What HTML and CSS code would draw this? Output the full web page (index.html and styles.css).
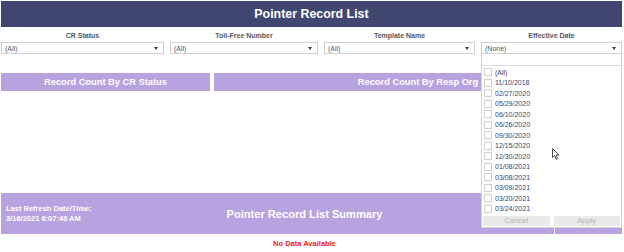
FILE: index.html
```html
<!DOCTYPE html>
<html lang="en">
<head>
  <meta charset="UTF-8">
  <title>Pointer Record List</title>
  <link rel="stylesheet" href="styles.css">
</head>
<body>
  <div class="page">
    <div class="title-bar">Pointer Record List</div>

    <div class="filters">
      <div class="filter">
        <div class="filter-label">CR Status</div>
        <div class="select"><span>(All)</span><i class="caret"></i></div>
      </div>
      <div class="filter">
        <div class="filter-label">Toll-Free Number</div>
        <div class="select"><span>(All)</span><i class="caret"></i></div>
      </div>
      <div class="filter">
        <div class="filter-label">Template Name</div>
        <div class="select"><span>(All)</span><i class="caret"></i></div>
      </div>
      <div class="filter filter-open">
        <div class="filter-label">Effective Date</div>
        <div class="select"><span>(None)</span><i class="caret"></i></div>

        <div class="dropdown">
          <div class="dropdown-search"></div>
          <ul class="dropdown-list">
            <li><span class="check"></span>(All)</li>
            <li><span class="check"></span>11/10/2018</li>
            <li><span class="check"></span>02/27/2020</li>
            <li><span class="check"></span>05/29/2020</li>
            <li><span class="check"></span>06/10/2020</li>
            <li><span class="check"></span>06/26/2020</li>
            <li><span class="check"></span>09/30/2020</li>
            <li><span class="check"></span>12/15/2020</li>
            <li><span class="check"></span>12/30/2020</li>
            <li><span class="check"></span>01/08/2021</li>
            <li><span class="check"></span>03/08/2021</li>
            <li><span class="check"></span>03/09/2021</li>
            <li><span class="check"></span>03/20/2021</li>
            <li><span class="check"></span>03/24/2021</li>
          </ul>
          <div class="dropdown-actions">
            <button type="button">Cancel</button>
            <button type="button">Apply</button>
          </div>
        </div>
      </div>
    </div>

    <div class="count-bars">
      <div class="count-bar">Record Count By CR Status</div>
      <div class="count-bar">Record Count By Resp Org</div>
    </div>

    <div class="summary-bar">
      <div class="summary-main">
        <div class="refresh">Last Refresh Date/Time:<br>3/16/2021 6:07:46 AM</div>
        <div class="summary-title">Pointer Record List Summary</div>
      </div>
      <div class="summary-side"></div>
    </div>

    <div class="no-data">No Data Available</div>
  </div>

  <!-- mouse pointer left in the shot -->
  <svg class="cursor" width="8" height="12" viewBox="0 0 8 12">
    <path d="M0.5 0.5 L0.5 9.5 L2.6 7.6 L4.2 11.2 L5.6 10.6 L4.1 7.1 L7 7.1 Z" fill="#fff" stroke="#333" stroke-width="0.9" stroke-linejoin="round"/>
  </svg>
</body>
</html>
```

FILE: styles.css
```css
body {
  margin: 0;
  font-family: "Liberation Sans", Arial, sans-serif;
  background: #ffffff;
}

.page {
  width: 621px;
  padding: 1px 0 0 1px;
}

.title-bar {
  height: 26px;
  line-height: 26px;
  background-color: #3f4670;
  color: #fff;
  font-size: 12.4px;
  font-weight: bold;
  text-align: center;
}

.filters {
  display: grid;
  grid-template-columns: 163px 148px 151px 141px;
  column-gap: 6px;
  margin-top: 4px;
}

.filter {
  position: relative;
}

.filter-label {
  height: 10px;
  line-height: 10px;
  font-size: 7px;
  font-weight: bold;
  color: #55575f;
  text-align: center;
}

.select {
  display: flex;
  align-items: center;
  justify-content: space-between;
  height: 12px;
  margin-top: 1px;
  padding: 0 5px 0 3px;
  border: 1px solid #cfcfd4;
  box-sizing: border-box;
  background: #fff;
  font-size: 7px;
  color: #55575f;
}

.caret {
  width: 0;
  height: 0;
  border-left: 2px solid transparent;
  border-right: 2px solid transparent;
  border-top: 3px solid #3a3a3a;
}

.dropdown {
  position: absolute;
  top: 100%;
  left: 0;
  right: 0;
  z-index: 5;
  background: #fff;
  border: 1px solid #d3d3d8;
  border-top: none;
  padding-bottom: 1px;
}

.dropdown-search {
  height: 11px;
  border-bottom: 1px solid #dcdce0;
}

.dropdown-list {
  list-style: none;
  margin: 0;
  padding: 1px 0 0;
}

.dropdown-list li {
  display: flex;
  align-items: center;
  height: 10.5px;
  font-size: 7px;
  color: #3b4668;
}

.check {
  width: 8px;
  height: 8px;
  margin: 0 3px 0 2px;
  border: 1px solid #d0d0d4;
  box-sizing: border-box;
  background: #fff;
}

.dropdown-actions {
  display: grid;
  grid-template-columns: 1fr 1fr;
  column-gap: 4px;
  padding: 2px 1px 0;
}

.dropdown-actions button {
  height: 10px;
  padding: 0;
  border: none;
  background: #e9e9ea;
  color: #b3b3b6;
  font-family: inherit;
  font-size: 7.5px;
  line-height: 10px;
}

.count-bars {
  display: grid;
  grid-template-columns: 209px 1fr;
  column-gap: 4px;
  margin-top: 19px;
}

.count-bar {
  height: 18px;
  line-height: 18px;
  background-color: #b8a3e1;
  color: #fff;
  font-size: 9.3px;
  font-weight: bold;
  text-align: center;
}

.summary-bar {
  display: flex;
  height: 41px;
  margin-top: 102px;
  background-color: #b8a3e1;
}

.summary-main {
  display: flex;
  align-items: center;
  flex: 1;
}

.refresh {
  flex: 0 0 86px;
  padding-left: 5px;
  font-size: 7.5px;
  line-height: 9.4px;
  font-weight: bold;
  color: #fff;
  white-space: nowrap;
}

.summary-title {
  flex: 1;
  padding-right: 37px;
  text-align: center;
  font-size: 11.1px;
  font-weight: bold;
  color: #fff;
}

.summary-side {
  width: 67px;
  border-left: 1px solid #fff;
}

.no-data {
  margin-top: 5px;
  padding-right: 14px;
  line-height: 10px;
  text-align: center;
  font-size: 7.5px;
  font-weight: bold;
  color: #f21b1b;
}

.cursor {
  position: absolute;
  left: 552px;
  top: 148px;
  z-index: 10;
}
```
